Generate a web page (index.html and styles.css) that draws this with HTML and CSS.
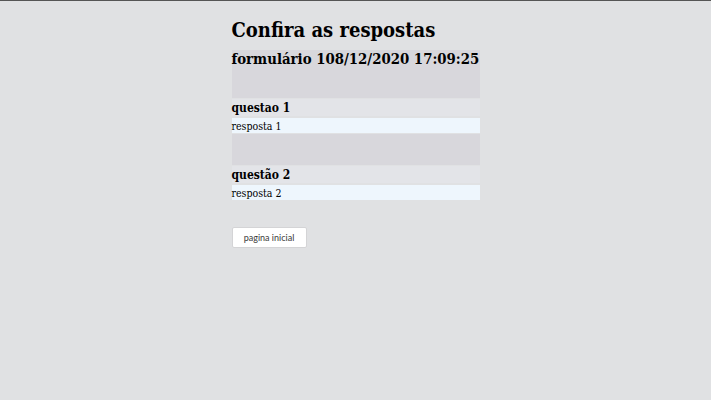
FILE: index.html
```html
<!DOCTYPE html>
<html lang="pt">
<head>
<meta charset="utf-8">
<title>Confira as respostas</title>
<link rel="stylesheet" href="styles.css">
</head>
<body>
<main class="page">
  <h1 class="title">Confira as respostas</h1>
  <section class="form-head">
    <h2 class="form-name">formulário 108/12/2020 17:09:25</h2>
  </section>
  <div class="question">questao 1</div>
  <div class="answer">resposta 1</div>
  <div class="spacer"></div>
  <div class="question">questão 2</div>
  <div class="answer">resposta 2</div>
  <div class="actions">
    <button class="btn" type="button">pagina inicial</button>
  </div>
</main>
</body>
</html>
```
FILE: styles.css
```css
html, body {
  margin: 0;
  padding: 0;
}
body {
  background: #e0e1e3;
  border-top: 1px solid #555;
  min-height: 399px;
  font-family: "DejaVu Serif Condensed", "DejaVu Serif", serif;
  font-stretch: condensed;
  color: #000;
}
.page {
  width: 248px;
  margin: 0 auto;
  display: flex;
  flex-direction: column;
}
.title {
  font-size: 20px;
  font-weight: bold;
  margin: 16px 0 0;
  line-height: 26px;
}
.form-head {
  margin-top: 7px;
  background: #d8d7dc;
  height: 48px;
}
.form-name {
  margin: 0;
  font-size: 14.8px;
  line-height: 17px;
  white-space: nowrap;
}
.question {
  margin-top: 1px;
  background: #e3e4e8;
  font-size: 12px;
  font-weight: bold;
  height: 17px;
  padding-top: 1px;
  box-sizing: border-box;
  line-height: 16px;
}
.answer {
  margin-top: 2px;
  background: #eef6fd;
  font-size: 10.5px;
  height: 15px;
  padding-top: 1px;
  box-sizing: border-box;
  line-height: 14px;
}
.spacer {
  background: #d8d7dc;
  height: 31px;
  margin-top: 1px;
}
.actions {
  margin-top: 26px;
}
.btn {
  width: 75px;
  height: 21px;
  background: #fff;
  border: 1px solid #d4d4d6;
  border-radius: 2px;
  font-family: "Lato", sans-serif;
  font-stretch: normal;
  font-size: 9px;
  color: #3a3a3a;
  padding: 0;
}
```
